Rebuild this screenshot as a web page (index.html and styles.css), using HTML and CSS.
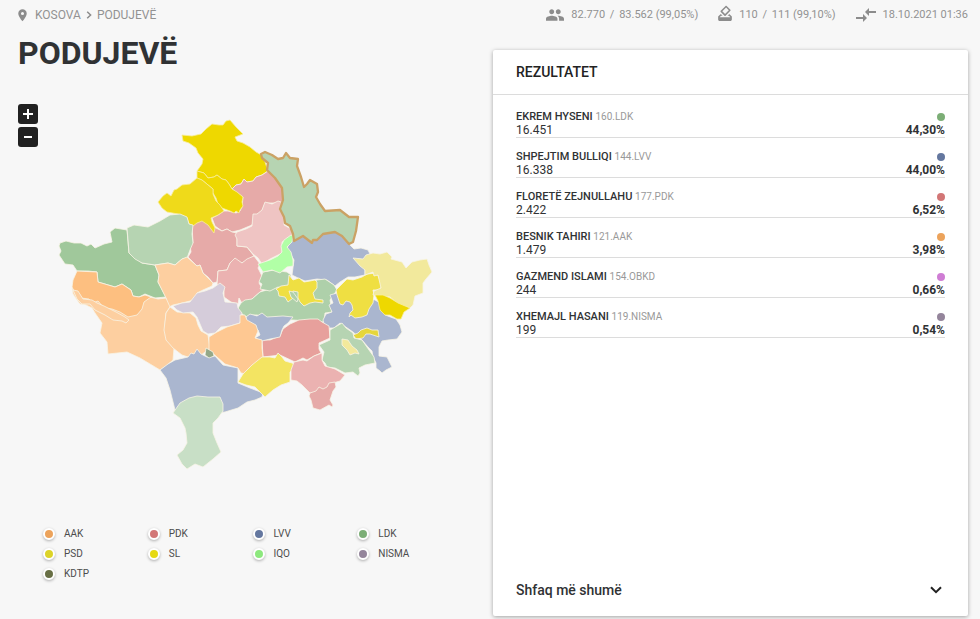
FILE: index.html
```
<!DOCTYPE html>
<html lang="sq">
<head>
<meta charset="utf-8">
<meta name="viewport" content="width=device-width, initial-scale=1">
<title>Podujevë</title>
<link rel="stylesheet" href="styles.css">
</head>
<body>
<div class="page">
  <header class="topbar">
    <nav class="crumbs">
      <svg class="pin" viewBox="0 0 10 14" aria-hidden="true"><path fill-rule="evenodd" d="M5 0a4.700 4.700 0 0 0-4.700 4.700C.3 8.200 5 13.400 5 13.400s4.700-5.200 4.700-8.700A4.700 4.700 0 0 0 5 0zm0 6.400a1.700 1.700 0 1 1 0-3.400 1.700 1.700 0 0 1 0 3.400z"/></svg>
      <a href="#">KOSOVA</a>
      <svg class="sep" viewBox="0 0 6 8" aria-hidden="true"><path d="M1.200.8 4.600 4 1.200 7.200"/></svg>
      <a href="#">PODUJEVË</a>
    </nav>
    <ul class="stats">
      <li>
        <svg class="people" viewBox="1 5 22 14" aria-hidden="true"><path d="M16 11c1.660 0 2.990-1.340 2.990-3S17.660 5 16 5s-3 1.340-3 3 1.340 3 3 3zm-8 0c1.660 0 2.990-1.340 2.990-3S9.660 5 8 5 5 6.340 5 8s1.340 3 3 3zm0 2c-2.330 0-7 1.170-7 3.500V19h14v-2.500C15 14.170 10.330 13 8 13zm8 0c-.29 0-.62.020-.97.050C16.190 13.890 17 15.020 17 16.500V19h6v-2.500c0-2.330-4.670-3.500-7-3.500z"/></svg>
        <span>82.770 <span class="of">/</span> 83.562 (99,05%)</span>
      </li>
      <li>
        <svg class="ballot" viewBox="3 1 18 21" aria-hidden="true"><path d="M18 13h-.68l-2 2h1.910L19 17H5l1.780-2h2.050l-2-2H6l-3 3v4c0 1.100.89 2 1.990 2H19c1.100 0 2-.89 2-2v-4l-3-3zm-1-5.050l-4.950 4.950-3.540-3.540 4.950-4.950L17 7.950zm-4.240-5.660L6.390 8.660c-.39.39-.39 1.020 0 1.410l4.950 4.950c.39.39 1.020.39 1.410 0l6.360-6.360c.39-.39.39-1.020 0-1.410L14.160 2.300c-.38-.4-1.010-.4-1.400-.01z"/></svg>
        <span>110 <span class="of">/</span> 111 (99,10%)</span>
      </li>
      <li>
        <svg class="arrows" viewBox="2 5 20 14" aria-hidden="true"><path d="M9.010 14H2v2h7.010v3L13 15l-3.990-4v3zm5.980-1v-3H22V8h-7.010V5L11 9l3.990 4z"/></svg>
        18.10.2021 01:36
      </li>
    </ul>
  </header>

  <main class="columns">
    <section class="left">
      <h1>PODUJEVË</h1>
      <div class="map">
        <svg class="map-art" viewBox="18 104 475 380" role="img" aria-label="Harta e komunave">
          <g class="areas">
            <path class="n1" d="M182 135 192 136 201 134 206 129 212 124 219 125 223 125 226 121 230 120 236 127 243 134 235 137 237 141 243 143 250 147 256 152 263 156 268 171 262 175 256 177 253 181 247 182 244 179 241 184 236 185 232 189 229 184 226 180 222 179 217 175 214 177 208 178 204 173 197 171 202 164 203 159 198 153 196 148 189 143 183 141Z"/>
            <path class="p2" d="M268 171 262 175 256 177 253 181 247 182 244 179 241 184 236 185 232 189 243 197 242 207 240 211 236 213 228 211 224 211 218 215 212 218 215 226 222 231 227 229 232 232 240 230 252 225 255 216 262 211 265 203 284 203 290 195 290 185Z"/>
            <path class="n1" d="M197 171 204 173 208 178 214 177 217 175 222 179 226 180 229 184 232 189 237 192 243 197 242 202 243 206 240 210 239 213 236 211 234 213 230 211 222 208 218 204 216 198 213 193 213 189 202 180 197 178Z"/>
            <path class="p2" d="M192 225 202 219 214 227 222 231 227 229 232 232 237 233 237 246 247 247 254 256 242 263 235 260 230 263 227 270 218 271 217 282 213 283 208 277 203 273 200 265 197 266 188 257 191 252 190 245 193 243Z"/>
            <path class="n2" d="M197 178 190 184 182 185 177 189 174 190 171 196 167 193 163 196 158 202 162 208 167 212 178 214 187 218 189 224 193 226 197 223 202 221 208 225 214 233 215 228 212 222 211 218 218 215 224 211 220 205 216 201 213 194 213 189 202 180Z"/>
            <path class="p4" d="M265 202 272 204 278 201 284 203 280 210 284 217 284 225 291 229 293 236 282 242 282 253 270 259 262 264 258 258 253 254 247 247 237 246 237 239 235 235 237 232 246 229 252 226 253 214 257 214 262 210Z"/>
            <path class="p3" d="M254 256 247 259 242 263 235 258 230 263 227 270 218 271 217 285 224 288 224 297 231 302 238 304 239 298 243 305 252 299 260 292 263 290 259 283 262 276 258 268 260 264Z"/>
            <path class="b" d="M293 236 303 230 335 228 350 245 354 249 361 248 368 250 370 254 366 260 358 259 365 265 365 275 355 277 348 277 340 282 335 286 327 280 317 279 305 281 298 278 292 275 294 260 287 248Z"/>
            <path class="g3" d="M237 310 241 303 245 300 252 299 260 292 277 287 285 290 300 290 317 280 325 279 334 285 337 290 330 300 332 312 325 313 324 322 308 321 293 320 283 320 276 317 270 319 257 315 250 315 246 317Z"/>
            <path class="g3" d="M263 272 274 270 287 272 291 275 289 285 282 288 278 287 270 291 260 289 262 284 259 282Z"/>
            <path class="iqo" d="M291 235 293 236 292 242 287 247 291 252 293 260 293 266 287 267 280 273 272 270 263 272 258 264 270 260 278 256 282 252 281 246 284 240Z"/>
            <path class="b" d="M337 293 330 295 333 303 329 305 332 312 326 314 323 320 325 328 334 328 340 323 353 332 362 340 368 347 372 351 373 357 376 363 376 368 380 371 382 373 386 370 392 367 389 361 387 357 379 356 379 347 382 341 388 340 397 339 402 332 400 325 396 319 385 315 380 303 375 300 350 293Z"/>
            <path class="y1" d="M289 275 293 280 299 278 304 282 310 281 315 280 317 282 317 288 313 293 315 299 323 300 323 303 315 302 310 303 304 306 300 302 298 298 298 292 293 291 292 294 293 298 288 302 285 297 279 296 278 291 276 289 281 286 288 285Z"/>
            <path class="g3" d="M289 291 293 292 298 299 297 302 291 297Z"/>
            <path class="y1" d="M336 290 342 284 347 279 353 280 362 277 367 274 377 273 379 278 382 285 380 290 373 290 374 295 373 303 369 309 367 315 362 317 355 318 351 315 349 317 350 313 353 310 352 305 350 302 346 301 343 305 340 304 337 295Z"/>
            <path class="y3" d="M353 258 363 259 366 255 373 253 380 254 387 252 392 257 391 259 402 262 406 268 412 262 420 260 427 259 429 265 432 272 426 279 423 283 423 293 415 296 413 305 410 308 398 304 390 297 373 295 374 291 381 288 378 275 374 276 373 272 365 275 365 270 360 266Z"/>
            <path class="n1" d="M375 295 383 295 390 298 398 303 410 308 404 312 401 319 397 319 390 315 385 315 380 310 378 301Z"/>
            <path class="y2" d="M353 335 358 333 361 330 367 328 372 330 378 330 379 337 373 335 370 334 366 334 363 338 356 339Z"/>
            <path class="r" d="M262 340 270 340 280 336 283 329 290 324 299 320 310 319 318 319 322 322 329 326 330 338 319 343 319 349 321 353 314 356 307 360 303 358 295 362 280 355 263 357Z"/>
            <path class="g2" d="M330 330 337 326 342 323 346 328 353 333 354 338 362 340 369 350 374 357 375 363 365 365 359 368 360 373 358 376 353 372 345 373 335 368 327 367 325 363 322 360 324 352 319 345 330 340Z"/>
            <path class="y3" d="M342 339 348 340 352 346 357 350 359 354 355 353 350 355 347 350 342 345Z"/>
            <path class="b" d="M246 317 250 314 257 316 262 313 267 317 283 316 293 317 288 323 284 326 282 330 280 337 270 339 262 341 255 338 260 335 258 330 247 328Z"/>
            <path class="g1" d="M60 243 66 241 74 243 81 243 87 246 91 244 95 248 104 244 112 242 110 232 115 228 127 230 129 253 142 263 155 265 159 275 158 282 166 297 155 298 145 294 139 297 133 296 131 290 122 284 115 287 98 282 97 272 88 271 77 271 73 265 65 264 59 255 61 251 59 246Z"/>
            <path class="g2" d="M127 228 134 225 141 226 148 227 160 221 170 215 180 214 187 217 189 224 193 225 192 234 193 243 190 250 187 258 182 259 175 265 168 263 155 265 142 263 135 259 129 253 128 240Z"/>
            <path class="o2" d="M155 265 168 263 175 265 182 259 187 257 197 266 200 265 203 273 208 278 213 283 212 286 203 290 197 293 195 299 190 301 182 303 173 305 167 308 166 298 158 282 159 275Z"/>
            <path class="o2" d="M72 288 100 300 137 305 150 297 158 299 166 298 170 307 166 313 165 325 167 340 174 348 173 360 166 366 160 370 150 364 140 358 127 352 108 354 107 342 100 333 102 323 95 313 92 308 86 305 80 304 77 300 73 294Z"/>
            <path class="o1" d="M77 271 97 272 98 282 115 287 122 284 131 290 133 296 139 297 145 295 151 297 144 302 142 309 137 315 128 317 120 312 112 309 104 308 98 301 93 303 89 299 81 298 75 293 72 287 73 280Z"/>
            <path class="o2" d="M73 290 78 291 83 299 92 300 97 303 104 306 116 312 125 317 129 320 126 323 122 321 113 320 105 315 95 310 90 304 82 304 77 299Z"/>
            <path class="o2" d="M166 313 170 307 177 312 190 313 196 318 198 325 201 331 208 335 210 348 200 356 188 357 182 355 173 348 166 340 164 330Z"/>
            <path class="nis" d="M220 283 225 287 223 293 225 302 237 303 238 308 242 313 240 323 230 326 221 327 215 333 208 334 203 331 197 317 193 312 183 313 177 310 173 306 182 303 190 302 197 293 205 291 213 288Z"/>
            <path class="o3" d="M209 337 217 332 227 327 240 323 240 315 245 315 247 320 256 325 258 331 255 338 262 340 262 348 263 357 260 361 248 369 246 374 241 373 238 368 225 364 217 357 209 350Z"/>
            <path class="b" d="M160 370 168 364 175 360 188 357 191 353 194 354 197 349 201 354 207 357 215 356 223 365 238 368 238 383 250 388 263 393 262 397 255 400 247 402 238 408 225 412 200 415 175 410 170 390 166 378Z"/>
            <path class="ls" d="M173 413 180 403 189 398 197 396 208 397 220 397 223 404 223 411 218 418 213 423 213 433 217 443 221 452 213 459 203 467 195 464 187 469 182 464 177 455 183 450 187 443 186 433 185 428 180 418Z"/>
            <path class="kd" d="M206 348 213 352 214 356 209 358 205 355Z"/>
            <path class="y4" d="M238 382 243 374 252 365 262 357 270 357 275 358 278 353 282 357 285 361 292 363 298 366 290 372 290 382 281 385 273 390 265 397 262 394 255 387 246 385Z"/>
            <path class="p3" d="M294 362 303 360 307 361 314 356 322 353 322 360 325 366 335 369 345 375 340 381 333 383 325 392 310 393 302 385 297 381 291 380 291 370Z"/>
            <path class="p2" d="M310 393 316 391 319 387 323 389 327 387 329 383 335 382 336 387 333 391 330 400 333 405 332 407 329 405 320 410 313 408 311 400 309 396Z"/>
          </g>
          <path class="selected" d="M261 154 265 152 272 155 278 159 283 158 286 153 290 158 298 159 297 166 301 177 304 187 307 184 310 180 317 184 318 192 316 197 320 204 325 211 340 210 349 217 358 217 356 231 353 242 349 244 342 236 335 232 323 234 317 240 313 240 312 243 303 236 294 241 293 234 290 226 285 223 284 217 280 209 283 200 282 188 275 178 267 170 268 163 262 158Z"/>
        </svg>
        <div class="zoom">
          <button type="button" aria-label="Zmadho"><svg viewBox="0 0 20 20" aria-hidden="true"><path d="M5 10H15M10 5V15"/></svg></button>
          <button type="button" aria-label="Zvogëlo"><svg viewBox="0 0 20 20" aria-hidden="true"><path d="M6 10H14"/></svg></button>
        </div>
      </div>
      <ul class="legend">
        <li><i class="dot aak"></i>AAK</li>
        <li><i class="dot pdk"></i>PDK</li>
        <li><i class="dot lvv"></i>LVV</li>
        <li><i class="dot ldk"></i>LDK</li>
        <li><i class="dot psd"></i>PSD</li>
        <li><i class="dot sl"></i>SL</li>
        <li><i class="dot iqo"></i>IQO</li>
        <li><i class="dot nisma"></i>NISMA</li>
        <li><i class="dot kdtp"></i>KDTP</li>
      </ul>
    </section>

    <section class="card">
      <h2>REZULTATET</h2>
      <ul class="results">
        <li><span><b>EKREM HYSENI</b> <small>160.LDK</small></span><i class="dot ldk"></i><span class="votes">16.451</span><strong>44,30%</strong></li>
        <li><span><b>SHPEJTIM BULLIQI</b> <small>144.LVV</small></span><i class="dot lvv"></i><span class="votes">16.338</span><strong>44,00%</strong></li>
        <li><span><b>FLORETË ZEJNULLAHU</b> <small>177.PDK</small></span><i class="dot pdk"></i><span class="votes">2.422</span><strong>6,52%</strong></li>
        <li><span><b>BESNIK TAHIRI</b> <small>121.AAK</small></span><i class="dot aak"></i><span class="votes">1.479</span><strong>3,98%</strong></li>
        <li><span><b>GAZMEND ISLAMI</b> <small>154.OBKD</small></span><i class="dot obkd"></i><span class="votes">244</span><strong>0,66%</strong></li>
        <li><span><b>XHEMAJL HASANI</b> <small>119.NISMA</small></span><i class="dot nisma"></i><span class="votes">199</span><strong>0,54%</strong></li>
      </ul>
      <button type="button" class="more">Shfaq më shumë
        <svg viewBox="0 0 12 8" aria-hidden="true"><path d="M1 1.200 6 6.200 11 1.200"/></svg>
      </button>
    </section>
  </main>
</div>
</body>
</html>
```
FILE: styles.css
```
* {
  box-sizing: border-box;
}

body {
  margin: 0;
  background: #f7f7f7;
  color: #303234;
  font-family: Roboto, "Liberation Sans", sans-serif;
}

ul {
  margin: 0;
  padding: 0;
  list-style: none;
}

button {
  border: 0;
  font: inherit;
  color: inherit;
  cursor: pointer;
}

.page {
  display: flex;
  flex-direction: column;
  min-height: 100vh;
  padding: 0 12px 3px 18px;
}

/* Top bar */
.topbar {
  display: flex;
  justify-content: space-between;
  height: 30px;
  color: #929292;
  font-size: 12px;
  line-height: 30px;
}

.topbar svg {
  fill: #8c8c8c;
  flex: none;
}

.crumbs,
.stats,
.stats li {
  display: flex;
  align-items: center;
}

.crumbs a {
  color: inherit;
  text-decoration: none;
}

.pin {
  width: 9px;
  height: 13px;
  margin-right: 8px;
}

.topbar .sep {
  width: 6px;
  height: 8px;
  margin: 0 5px;
  fill: none;
  stroke: #8c8c8c;
  stroke-width: 1.500;
}

.stats {
  gap: 20px;
  font-size: 11px;
}

.stats li {
  gap: 7px;
}

.of {
  margin: 0 2px;
}

.people {
  width: 18px;
  height: 12px;
}

.ballot {
  width: 14px;
  height: 16px;
  margin-bottom: 4px;
}

.arrows {
  width: 20px;
  height: 14px;
}

/* Columns */
.columns {
  flex: 1;
  display: grid;
  grid-template-columns: 1fr 1fr;
}

h1 {
  margin: 4px 0 32px;
  font-size: 32px;
  font-weight: 700;
  line-height: 38px;
}

.map {
  position: relative;
}

.map-art {
  display: block;
  width: 100%;
}

.zoom {
  position: absolute;
  top: 0;
  left: 0;
  display: grid;
  gap: 3px;
}

.zoom button {
  width: 20px;
  height: 20px;
  padding: 0;
  border-radius: 3px;
  background: #212121;
}

.zoom svg {
  display: block;
  stroke: #fff;
  stroke-width: 2;
}

/* Municipality areas */
.areas path {
  stroke: #f8f4e6;
  stroke-width: .800;
  stroke-linejoin: round;
}

.areas .n1 { fill: #eed800; stroke: #f7ee9a; }
.areas .n2 { fill: #efda1a; stroke: #f7ee9a; }
.areas .p2 { fill: #e6aaa8; }
.areas .p3 { fill: #ebb2b1; }
.areas .p4 { fill: #efc4c3; }
.areas .r { fill: #e7a09c; }
.areas .b { fill: #aab6cf; }
.areas .g1 { fill: #a0c89b; }
.areas .g2 { fill: #b6d4b2; }
.areas .g3 { fill: #aed0aa; }
.areas .ls { fill: #c8dfc6; }
.areas .iqo { fill: #b1ffa6; }
.areas .y1 { fill: #efdf42; }
.areas .y2 { fill: #e6d63c; }
.areas .y3 { fill: #f2e99c; }
.areas .y4 { fill: #f3e462; }
.areas .o1 { fill: #fdbf80; }
.areas .o2 { fill: #fdcfa0; }
.areas .o3 { fill: #fec892; }
.areas .nis { fill: #d5ccda; }
.areas .kd { fill: #94a888; }

.selected {
  fill: #b6d4b2;
  stroke: #cba265;
  stroke-width: 2.300;
  stroke-linejoin: round;
}

/* Party colours */
.aak { background: #eca35b; }
.pdk { background: #d27676; }
.lvv { background: #64779f; }
.ldk { background: #7cae76; }
.psd { background: #dcd328; }
.sl { background: #e6d912; }
.dot.iqo { background: #8de87e; }
.nisma { background: #94859b; }
.kdtp { background: #686f45; }
.obkd { background: #cf7dd4; }

.dot {
  width: 8px;
  height: 8px;
  border-radius: 50%;
}

/* Legend */
.legend {
  display: grid;
  grid-template-columns: repeat(4, 1fr);
  margin: 40px 31px 0 25px;
  color: #4c4c4c;
  font-size: 10px;
  line-height: 20px;
}

.legend li {
  display: flex;
  align-items: center;
  gap: 9px;
}

.legend .dot {
  width: 12px;
  height: 12px;
  border: 2px solid #fff;
  box-shadow: 0 1px 3px rgba(0, 0, 0, .3);
}

/* Results card */
.card {
  display: flex;
  flex-direction: column;
  margin-top: 20px;
  border-radius: 2px;
  background: #fff;
  box-shadow: 0 1px 4px rgba(0, 0, 0, .35);
}

h2 {
  margin: 0 0 3px;
  padding: 0 23px;
  border-bottom: 1px solid #dcdcdc;
  color: #222;
  font-size: 14px;
  font-weight: 500;
  line-height: 44px;
}

.results {
  padding: 0 23px;
}

.results li {
  display: grid;
  grid-template-columns: 1fr auto;
  align-items: center;
  justify-items: end;
  padding-top: 11px;
  border-bottom: 1px solid #dcdcdc;
  font-size: 11px;
  line-height: 15px;
}

.results li > span {
  justify-self: start;
}

.results b {
  font-weight: 500;
}

.results small {
  color: #999;
  font-size: 10px;
  line-height: 1;
}

.results .votes,
.results strong {
  font-size: 12px;
  line-height: 13px;
}

.more {
  display: flex;
  justify-content: space-between;
  align-items: center;
  margin-top: auto;
  padding: 0 26px 0 23px;
  background: none;
  font-size: 14px;
  font-weight: 500;
  line-height: 52px;
}

.more svg {
  width: 12px;
  height: 8px;
  fill: none;
  stroke: #222;
  stroke-width: 2;
}
```
